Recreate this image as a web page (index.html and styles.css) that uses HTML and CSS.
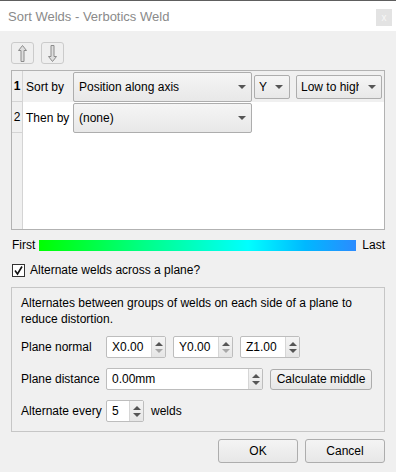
FILE: index.html
```html
<!DOCTYPE html>
<html lang="en">
<head>
  <meta charset="UTF-8" />
  <title>Sort Welds - Verbotics Weld</title>
  <link rel="stylesheet" href="styles.css">
</head>
<body>

  <div class="titlebar">
    <span class="title">Sort Welds - Verbotics Weld</span>
    <span class="close">x</span>
  </div>

  <div class="dialog">
    <div class="tools">
      <button class="tool" title="Move up">
        <svg width="9" height="17" viewBox="0 0 9 17"><path d="M4.5 0.5 L8.5 5.5 H6 V16.5 H3 V5.5 H0.5 Z" fill="#dedede" stroke="#8c8c8c" stroke-width="1" stroke-linejoin="round"/></svg>
      </button>
      <button class="tool" title="Move down">
        <svg width="9" height="17" viewBox="0 0 9 17"><path d="M4.5 16.5 L8.5 11.5 H6 V0.5 H3 V11.5 H0.5 Z" fill="#dedede" stroke="#8c8c8c" stroke-width="1" stroke-linejoin="round"/></svg>
      </button>
    </div>

    <!-- sort criteria -->
    <div class="sort-table">
      <div class="headers">
        <div class="rh current">1</div>
        <div class="rh">2</div>
      </div>
      <div class="rows">
        <div class="row current">
          <div class="cell-label">Sort by</div>
          <div class="combo wide"><span class="combo-text">Position along axis</span><span class="arrow"></span></div>
          <div class="combo small axis"><span class="combo-text">Y</span><span class="arrow"></span></div>
          <div class="combo small order"><span class="combo-text">Low to high</span><span class="arrow"></span></div>
        </div>
        <div class="row">
          <div class="cell-label">Then by</div>
          <div class="combo wide"><span class="combo-text">(none)</span><span class="arrow"></span></div>
        </div>
      </div>
    </div>

    <div class="legend">
      <span class="legend-first">First</span>
      <div class="legend-bar"></div>
      <span class="legend-last">Last</span>
    </div>

    <label class="check-row">
      <span class="checkbox">
        <svg width="11" height="11" viewBox="0 0 11 11"><path d="M2 5.5 L4.5 9 L9 1.5" fill="none" stroke="#111" stroke-width="1.6"/></svg>
      </span>
      Alternate welds across a plane?
    </label>

    <div class="group">
      <p class="group-text">Alternates between groups of welds on each side of a plane to reduce distortion.</p>

      <div class="field-row">
        <span class="field-label">Plane normal</span>
        <div class="spin normal"><span class="spin-text">X0.00</span><span class="spin-btns"><i class="up"></i><i class="down off"></i></span></div>
        <div class="spin normal"><span class="spin-text">Y0.00</span><span class="spin-btns"><i class="up"></i><i class="down off"></i></span></div>
        <div class="spin normal"><span class="spin-text">Z1.00</span><span class="spin-btns"><i class="up"></i><i class="down"></i></span></div>
      </div>

      <div class="field-row">
        <span class="field-label">Plane distance</span>
        <div class="spin distance"><span class="spin-text">0.00mm</span><span class="spin-btns"><i class="up"></i><i class="down"></i></span></div>
        <button class="btn calc">Calculate middle</button>
      </div>

      <div class="field-row">
        <span class="field-label">Alternate every</span>
        <div class="spin every"><span class="spin-text">5</span><span class="spin-btns"><i class="up"></i><i class="down"></i></span></div>
        <span class="unit">welds</span>
      </div>
    </div>

    <div class="actions">
      <button class="btn dlg">OK</button>
      <button class="btn dlg">Cancel</button>
    </div>
  </div>

</body>
</html>
```

FILE: styles.css
```css
body {
  margin: 0;
  width: 396px;
  height: 472px;
  overflow: hidden;
  background: #f0f0f0;
  font-family: "Liberation Sans", Arial, sans-serif;
  font-size: 12px;
  color: #000;
}

/* title bar */
.titlebar {
  height: 30px;
  border-top: 1px solid #5e5e5e;
  background: #fff;
  display: flex;
  align-items: center;
  justify-content: space-between;
  padding: 0 4px 0 8px;
}

.title {
  color: #8a8a8a;
  font-size: 13px;
}

.close {
  width: 16px;
  height: 17px;
  margin-top: 3px;
  background: #e3e3e3;
  color: #f7f7f7;
  font-size: 10px;
  display: flex;
  align-items: center;
  justify-content: center;
}

.dialog {
  padding: 11px 11px 0 11px;
  display: flex;
  flex-direction: column;
}

/* up / down */
.tools {
  display: flex;
  gap: 7px;
  margin-bottom: 6px;
}

.tool {
  width: 23px;
  height: 22px;
  padding: 0;
  border: 1px solid #cbcbcb;
  border-radius: 3px;
  background: #efefef;
  display: flex;
  align-items: center;
  justify-content: center;
}

/* table */
.sort-table {
  box-sizing: border-box;
  height: 160px;
  border: 1px solid #b2b2b2;
  background: #fff;
  display: flex;
}

.headers {
  width: 10px;
  background: #f0f0f0;
  border-right: 1px solid #d4d4d4;
}

.rh {
  height: 30px;
  line-height: 30px;
  border-bottom: 1px solid #d4d4d4;
  text-align: center;
}

.rh.current {
  font-weight: bold;
}

.rows {
  flex: 1;
}

.row {
  height: 31px;
  display: flex;
  align-items: center;
}

.row.current {
  background: #f0f0f0;
}

.cell-label {
  width: 47px;
  padding-left: 3px;
}

.combo {
  box-sizing: border-box;
  display: flex;
  align-items: center;
  border: 1px solid #adadad;
  border-radius: 2px;
  background: linear-gradient(#f5f5f5, #e8e8e8);
  padding: 0 5px 0 5px;
}

.combo-text {
  flex: 1;
  white-space: nowrap;
  overflow: hidden;
}

.arrow {
  width: 0;
  height: 0;
  border-left: 4px solid transparent;
  border-right: 4px solid transparent;
  border-top: 4px solid #555;
  margin-left: 4px;
}

.combo.wide {
  width: 179px;
  height: 30px;
}

.combo.small {
  height: 24px;
  padding: 0 6px 0 4px;
}

.combo.axis {
  width: 36px;
  margin-left: 2px;
}

.combo.order {
  width: 86px;
  margin-left: 6px;
}

.combo.order .combo-text {
  flex: none;
  width: 58px;
}

.combo.order .arrow {
  margin-left: 9px;
}

/* colour legend */
.legend {
  display: flex;
  align-items: center;
  margin-top: 8px;
  height: 14px;
}

.legend-first {
  width: 27px;
  padding-left: 1px;
}

.legend-bar {
  flex: 1;
  height: 11px;
  background: linear-gradient(to right, #00ff00, #00ff86 33%, #00ffff 66%, #00b8ff 84%, #2b8bff);
}

.legend-last {
  margin-left: 6px;
}

/* checkbox */
.check-row {
  display: flex;
  align-items: center;
  gap: 5px;
  margin-top: 10px;
  padding-left: 1px;
  height: 16px;
}

.checkbox {
  box-sizing: border-box;
  width: 13px;
  height: 13px;
  border: 1px solid #333;
  background: #fff;
  display: flex;
  align-items: center;
  justify-content: center;
}

/* group box */
.group {
  box-sizing: border-box;
  height: 145px;
  margin-top: 9px;
  border: 1px solid #c6c6c6;
  padding: 7px 9px 0 9px;
}

.group-text {
  margin: 0;
  line-height: 16px;
}

.field-row {
  display: flex;
  align-items: center;
  height: 22px;
  margin-top: 9px;
}

.field-row + .field-row {
  margin-top: 10px;
}

.field-label {
  width: 85px;
}

.spin {
  box-sizing: border-box;
  height: 22px;
  border: 1px solid #bdbdbd;
  border-radius: 2px;
  background: #fff;
  display: flex;
  align-items: stretch;
}

.spin-text {
  flex: 1;
  padding-left: 5px;
  display: flex;
  align-items: center;
}

.spin-btns {
  width: 13px;
  border-left: 1px solid #d6d6d6;
  background: linear-gradient(#f4f4f4, #e6e6e6);
  display: flex;
  flex-direction: column;
  align-items: center;
  justify-content: center;
  gap: 3px;
}

.spin-btns i {
  width: 0;
  height: 0;
  border-left: 4px solid transparent;
  border-right: 4px solid transparent;
}

.spin-btns .up {
  border-bottom: 4px solid #555;
}

.spin-btns .down {
  border-top: 4px solid #555;
}

.spin-btns .down.off {
  border-top-color: #a8a8a8;
}

.spin.normal {
  width: 60px;
  margin-right: 7px;
}

.spin.distance {
  width: 157px;
}

.spin.every {
  width: 38px;
}

.unit {
  margin-left: 7px;
}

.btn {
  font-family: inherit;
  font-size: 12px;
  color: #000;
  border: 1px solid #adadad;
  border-radius: 3px;
  background: linear-gradient(#f4f4f4, #e7e7e7);
  padding: 0;
}

.btn.calc {
  width: 102px;
  height: 21px;
  margin-left: 7px;
}

.actions {
  display: flex;
  justify-content: flex-end;
  gap: 7px;
  margin-top: 7px;
}

.btn.dlg {
  width: 80px;
  height: 24px;
}
```
